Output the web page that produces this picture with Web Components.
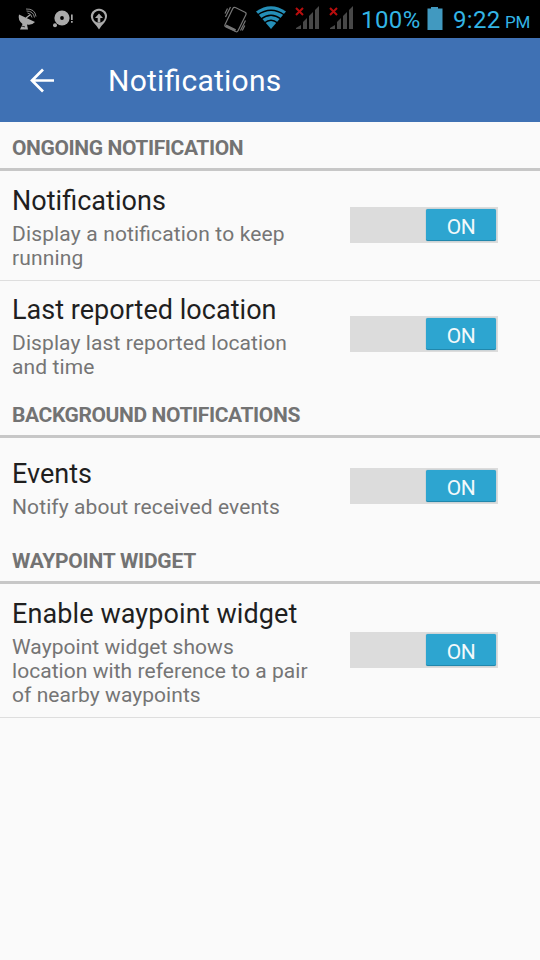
<!DOCTYPE html>
<html lang="en">
<head>
<meta charset="utf-8">
<title>Notifications</title>
<style>
html,body{margin:0;background:#fafafa}
body{width:540px;height:960px;overflow:hidden;font-family:Roboto,"Noto Sans",sans-serif;font-feature-settings:"liga" 1}
</style>
</head>
<body>
<settings-screen></settings-screen>
<script>
const define = (name, html) => {
  const t = document.createElement('template');
  t.innerHTML = html;
  customElements.define(name, class extends HTMLElement {
    constructor() {
      super();
      this.attachShadow({mode: 'open'}).append(t.content.cloneNode(true));
    }
  });
};

define('status-bar', `
<style>
:host{display:flex;box-sizing:border-box;height:38px;background:#000;color:#33b5e5;white-space:nowrap}
svg{display:block;flex:none}
.battery{font-size:24px;line-height:40px;width:59px;margin-left:6px;letter-spacing:.4px}
.clock{font-size:24px;line-height:40px;margin-left:10px;width:52px;letter-spacing:.3px}
.pm{font-size:17px;line-height:45px;letter-spacing:-.2px}
</style>
<svg width="130" height="38" fill="#aaa">
  <path d="M19 14.500L35 22Q32 25.500 27 24.500L28 29.500H20L22.500 24Q17.500 20 19 14.500Z"/>
  <path d="M20 25.700l5 1.200" stroke="#000" stroke-width=".7"/>
  <path d="M26 18l4.500-3.500" stroke="#aaa" stroke-width="1.300"/>
  <path d="M27.500 13q4 .5 4.500 4.500M26.500 11q7 0 8 6.500M26 9q9-.5 10 7.500" fill="none" stroke="#888" stroke-width="1"/>
  <circle cx="62" cy="18" r="7.600"/><circle cx="62" cy="18" r="1.900" fill="#000"/><circle cx="55" cy="25.300" r="2"/>
  <path d="M71 14.500h1.700v5.500h-1.700zM71 21h1.700v1.800h-1.700z"/>
  <path fill-rule="evenodd" d="M99 29.500Q97 26 93.500 22.500C87 14 94 8.700 99 8.700S111 14 104.500 22.500Q101 26 99 29.500ZM99 10.700A6 6 0 1 0 99 22.700 6 6 0 0 0 99 10.700Z"/>
  <path d="M99 13.500l4 4.500h-2.700v4.500h-2.600V18H95z"/>
</svg>
<svg width="225" height="38" viewBox="130 0 225 38">
  <g fill="none" stroke="#777" stroke-width="1.200">
    <rect x="228.300" y="8.800" width="14.400" height="21.500" rx="1.800" transform="rotate(26 235.500 19.500)"/>
    <path d="M225.800 25.500L235.500 30.300" stroke-width="2.400"/>
    <path d="M230.500 7l-5 10M227.500 8.500l-2.500 5M245.500 20.500l-5 10M244.800 25.500l-2.500 5"/>
  </g>
  <path d="M256 11.500Q271 1 286 11.500L271 29Z" fill="#258fb8"/>
  <path d="M257.500 15Q271 5.500 284.500 15M261 19Q271 11.500 281 19M264.300 23Q271 17.500 277.700 23" fill="none" stroke="#000" stroke-width="1.400"/>
  <g id="s">
    <path d="M296 29v-1l5-3v4zM303 29v-7l4-4v11zM309 29V16l4-4v17zM315 29V10l4-4v23z" fill="#484848"/>
    <path d="M296 8l7 7M303 8l-7 7" stroke="#b80d0d" stroke-width="2"/>
  </g>
  <use href="#s" x="34"/>
</svg>
<span class="battery">100%</span>
<svg width="23" height="38" viewBox="0 0 23 38"><path d="M7.500 8.500h3.500V7h7v1.500h4.500V30H7.500z" fill="#4199c0"/></svg>
<span class="clock">9:22</span><span class="pm">PM</span>
`);

define('app-bar', `
<style>
:host{display:flex;align-items:center;box-sizing:border-box;height:84px;padding:1px 29px 0;gap:53px;background:#3f71b4;color:#fff;font-size:30px;line-height:37px;letter-spacing:.24px}
svg{display:block}
</style>
<svg width="26" height="26" fill="none" stroke="#fff" stroke-width="2.700"><path d="M25 12.500H3M14 1.500L3 12.500l11 11"/></svg>
<slot></slot>
`);

define('section-header', `
<style>
:host{display:block;box-sizing:border-box;height:49px;padding:13px 12px 0;border-bottom:3px solid #c7c7c7;color:#737373;font-weight:700;font-size:21px;line-height:26px;letter-spacing:var(--ls,-.39px);white-space:nowrap}
</style><slot></slot>
`);

define('toggle-switch', `
<style>
:host{display:flex;justify-content:flex-end;box-sizing:border-box;width:148px;height:36px;padding:2px 2px 2px 0;background:#dcdcdc}
span{box-sizing:border-box;width:70px;height:32px;border-radius:2px;background:#2da5d0;border-bottom:1px solid #2187ac;box-shadow:0 0 1px #4b8fa9;color:#f3f9fb;font-size:21px;letter-spacing:-.5px;line-height:36px;text-align:center}
</style><span><slot></slot></span>
`);

define('setting-row', `
<style>
:host{display:flex;align-items:center;justify-content:space-between;box-sizing:border-box;height:var(--h);padding:0 42px var(--bottom,1px) 12px}
:host([divided]){border-bottom:1px solid #dedede}
.text{align-self:flex-start;padding-top:var(--top,14px);white-space:nowrap}
.title{color:#1f1f1f;font-size:27px;line-height:32px;letter-spacing:var(--title-ls,.03px)}
.summary{color:#757575;font-size:21px;line-height:24px;margin-top:5px;letter-spacing:var(--ls,.1px)}
</style>
<div class="text"><div class="title"><slot name="title"></slot></div><div class="summary"><slot></slot></div></div>
<toggle-switch>ON</toggle-switch>
`);

define('settings-screen', `
<style>:host{display:flex;flex-direction:column;height:960px;background:#fafafa}
:host>*{flex:none}</style>
<status-bar></status-bar>
<app-bar>Notifications</app-bar>
<section-header>ONGOING NOTIFICATION</section-header>
<setting-row divided style="--h:110px;--ls:.15px"><span slot="title">Notifications</span>Display a notification to keep<br>running</setting-row>
<setting-row style="--h:108px;--top:13px;--bottom:2px"><span slot="title">Last reported location</span>Display last reported location<br>and time</setting-row>
<section-header>BACKGROUND NOTIFICATIONS</section-header>
<setting-row style="--h:97px;--top:20px"><span slot="title">Events</span>Notify about received events</setting-row>
<section-header style="--ls:-.24px">WAYPOINT WIDGET</section-header>
<setting-row divided style="--h:134px;--ls:.05px;--title-ls:.1px"><span slot="title">Enable waypoint widget</span>Waypoint widget shows<br>location with reference to a pair<br>of nearby waypoints</setting-row>
`);
</script>
</body>
</html>
